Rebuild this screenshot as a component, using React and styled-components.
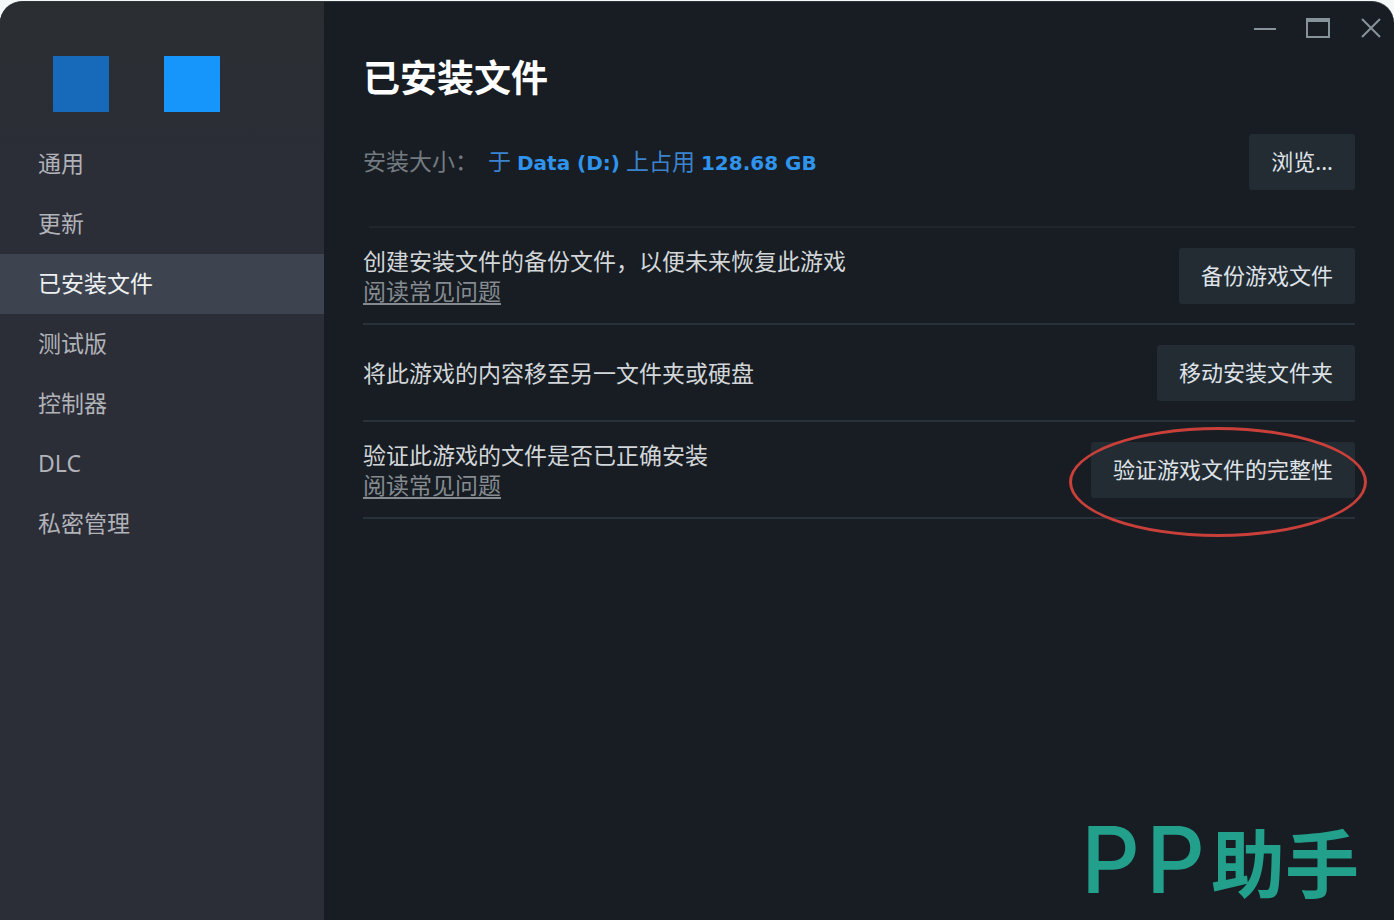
import React from "react";
import styled, { createGlobalStyle } from "styled-components";

const GlobalStyle = createGlobalStyle`
  * { box-sizing: border-box; }
  body {
    margin: 0;
    background: #f4f8f8;
    font-family: "Noto Sans", "Noto Sans CJK SC", sans-serif;
    font-size: 23px;
    line-height: 30px;
  }
  button { font: inherit; border: 0; margin: 0; cursor: pointer; }
`;

const Window = styled.div`
  position: relative;
  display: flex;
  min-height: calc(100vh - 1px);
  margin-top: 1px;
  overflow: hidden;
  background: #171d23;
  border-top: 1px solid #30373b;
  border-radius: 22px 22px 0 0;
`;

const Sidebar = styled.aside`
  flex: 0 0 324px;
  background: linear-gradient(#2b2e31, #2b2d37 160px);
`;

const Swatches = styled.div`
  display: flex;
  gap: 55px;
  padding: 54px 53px 22px;
`;

const Swatch = styled.span`
  width: 56px;
  height: 56px;
  background: ${(p) => p.$color};
`;

const Nav = styled.nav`
  display: flex;
  flex-direction: column;
`;

const NavLink = styled.a`
  padding: 14px 38px 16px;
  color: ${(p) => (p.$active ? "#eef0f2" : "#b1b3b8")};
  background: ${(p) => (p.$active ? "#3d4450" : "transparent")};
  text-decoration: none;
`;

const Main = styled.main`
  flex: 1;
  min-width: 0;
`;

const TitleBar = styled.div`
  display: flex;
  justify-content: flex-end;
  gap: 29px;
  height: 44px;
  padding: 14px 11px 0;
`;

const WindowButton = styled.button`
  width: 24px;
  height: 24px;
  padding: 0;
  background: none;
  color: #87939b;

  svg { display: block; }
`;

const Content = styled.div`
  padding: 0 39px;
`;

const Title = styled.h1`
  margin: 0 0 24px;
  color: #fff;
  font-size: 37px;
  font-weight: 700;
  line-height: 64px;
`;

const SizeRow = styled.div`
  display: flex;
  align-items: center;
  justify-content: space-between;
  margin-bottom: 36px;
`;

const SizeText = styled.p`
  display: flex;
  gap: 10px;
  margin: 0;
  color: #737a80;
`;

const SizeValue = styled.span`
  color: #3b83ce;

  strong {
    color: #3093ec;
    font-family: "DejaVu Sans", sans-serif;
    font-size: 20px;
  }
`;

const Divider = styled.hr`
  height: 2px;
  margin: 0 0 0 6px;
  border: 0;
  background: #1f272d;
`;

const ActionRow = styled.section`
  display: flex;
  align-items: center;
  justify-content: space-between;
  height: 97px;
  border-bottom: 2px solid #29323a;
`;

const Description = styled.p`
  margin: 0;
  color: #d3d6d9;
`;

const FaqLink = styled.a`
  color: #858b90;
  text-decoration: underline;
  text-decoration-thickness: 2px;
  text-underline-offset: 3px;
`;

const ActionButton = styled.button`
  height: 56px;
  padding: 0 22px 2px;
  color: #dfe3e8;
  background: #232c33;
  border-radius: 3px;
  font-size: 22px;
  white-space: nowrap;
`;

const Highlighted = styled.div`
  position: relative;

  &::after {
    content: "";
    position: absolute;
    inset: -15px -12px -39px -22px;
    border: 3px solid #c9403a;
    border-radius: 50%;
    pointer-events: none;
  }
`;

const Brand = styled.div`
  position: absolute;
  right: 35px;
  bottom: 12px;
  display: flex;
  align-items: center;
  gap: 6px;
  height: 96px;
  color: #23a08c;
  line-height: 96px;
`;

const BrandLatin = styled.span`
  font-family: Inter, sans-serif;
  font-size: 92px;
  font-weight: 500;
`;

const BrandHan = styled.span`
  font-family: "Noto Sans CJK SC", sans-serif;
  font-size: 74px;
  font-weight: 700;
`;

const navItems = ["通用", "更新", "已安装文件", "测试版", "控制器", "DLC", "私密管理"];

export default function App() {
  return (
    <>
      <GlobalStyle />
      <Window>
        <Sidebar>
          <Swatches>
            <Swatch $color="#1769b9" />
            <Swatch $color="#1695fb" />
          </Swatches>
          <Nav>
            {navItems.map((item) => (
              <NavLink key={item} href="#" $active={item === "已安装文件"}>
                {item}
              </NavLink>
            ))}
          </Nav>
        </Sidebar>
        <Main>
          <TitleBar>
            <WindowButton aria-label="最小化">
              <svg width="24" height="24" viewBox="0 0 24 24" fill="none" stroke="currentColor" strokeWidth="2">
                <path d="M1 13h22" />
              </svg>
            </WindowButton>
            <WindowButton aria-label="最大化">
              <svg width="24" height="24" viewBox="0 0 24 24" fill="none" stroke="currentColor">
                <path d="M1 3h22v18H1z" strokeWidth="2" />
                <path d="M0 4h24" strokeWidth="4" />
              </svg>
            </WindowButton>
            <WindowButton aria-label="关闭">
              <svg width="24" height="24" viewBox="0 0 24 24" fill="none" stroke="currentColor" strokeWidth="2">
                <path d="M3 3l18 18M21 3L3 21" />
              </svg>
            </WindowButton>
          </TitleBar>
          <Content>
            <Title>已安装文件</Title>
            <SizeRow>
              <SizeText>
                <span>安装大小：</span>
                <SizeValue>
                  于 <strong>Data (D:)</strong> 上占用 <strong>128.68 GB</strong>
                </SizeValue>
              </SizeText>
              <ActionButton>浏览...</ActionButton>
            </SizeRow>
            <Divider />
            <ActionRow>
              <Description>
                创建安装文件的备份文件，以便未来恢复此游戏
                <br />
                <FaqLink href="#">阅读常见问题</FaqLink>
              </Description>
              <ActionButton>备份游戏文件</ActionButton>
            </ActionRow>
            <ActionRow>
              <Description>将此游戏的内容移至另一文件夹或硬盘</Description>
              <ActionButton>移动安装文件夹</ActionButton>
            </ActionRow>
            <ActionRow>
              <Description>
                验证此游戏的文件是否已正确安装
                <br />
                <FaqLink href="#">阅读常见问题</FaqLink>
              </Description>
              <Highlighted>
                <ActionButton>验证游戏文件的完整性</ActionButton>
              </Highlighted>
            </ActionRow>
          </Content>
        </Main>
        <Brand>
          <BrandLatin>P</BrandLatin>
          <BrandLatin>P</BrandLatin>
          <BrandHan>助手</BrandHan>
        </Brand>
      </Window>
    </>
  );
}
